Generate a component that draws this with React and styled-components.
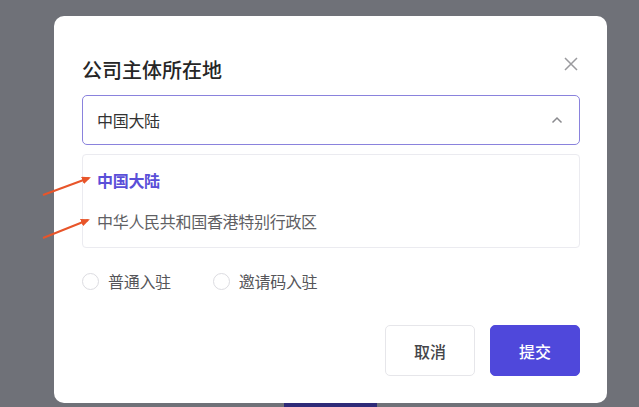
import React, { useState } from 'react';
import styled, { createGlobalStyle } from 'styled-components';

const GlobalStyle = createGlobalStyle`
  html, body {
    margin: 0;
    padding: 0;
    background: #6f7178;
    font-family: "Noto Sans CJK SC", "Noto Sans", sans-serif;
  }
`;

const Page = styled.div`
  position: relative;
  width: 639px;
  height: 407px;
  overflow: hidden;
  padding: 16px 32px 0 54px;
  box-sizing: border-box;
`;

const Modal = styled.div`
  width: 553px;
  height: 387px;
  box-sizing: border-box;
  background: #fff;
  border-radius: 10px;
  padding: 40px 27px 27px 28px;
  display: flex;
  flex-direction: column;
`;

const Header = styled.div`
  display: flex;
  align-items: center;
  justify-content: space-between;
  height: 28px;
`;

const Title = styled.h2`
  margin: 0;
  font-size: 20px;
  line-height: 28px;
  font-weight: 500;
  color: #262626;
`;

const CloseButton = styled.button`
  border: 0;
  background: none;
  padding: 0;
  width: 16px;
  height: 16px;
  margin: -12px 1px 0 0;
  display: flex;
  align-items: center;
  justify-content: center;
  color: #9a9a9e;
  cursor: pointer;
`;

const SelectBox = styled.div`
  margin-top: 11px;
  height: 50px;
  box-sizing: border-box;
  border: 1.5px solid #8a82dd;
  border-radius: 5px;
  display: flex;
  align-items: center;
  justify-content: space-between;
  padding: 0 16px 0 14px;
  font-size: 16px;
  letter-spacing: -0.3px;
  color: #333;
`;

const Menu = styled.ul`
  list-style: none;
  margin: 9px 0 0;
  padding: 4px 0 8px;
  height: 94px;
  box-sizing: border-box;
  border: 1px solid #ebebf0;
  border-radius: 4px;
`;

const Option = styled.li`
  height: 41px;
  display: flex;
  align-items: center;
  padding-left: 14px;
  font-size: 16px;
  letter-spacing: -0.3px;
  font-weight: ${p => (p.$active ? 600 : 400)};
  color: ${p => (p.$active ? '#5a4fd8' : '#5f5f64')};
`;

const RadioRow = styled.div`
  margin-top: 21px;
  height: 24px;
  display: flex;
  align-items: center;
  gap: 42px;
`;

const RadioLabel = styled.label`
  display: flex;
  align-items: center;
  gap: 9px;
  font-size: 16px;
  letter-spacing: -0.3px;
  color: #555559;
  cursor: pointer;
`;

const RadioDot = styled.span`
  width: 17px;
  height: 17px;
  box-sizing: border-box;
  border-radius: 50%;
  border: 1px solid ${p => (p.$checked ? '#5a4fd8' : '#dcdce1')};
  background: #fff;
`;

const Footer = styled.div`
  margin-top: auto;
  display: flex;
  justify-content: flex-end;
  gap: 15px;
`;

const Button = styled.button`
  width: 90px;
  height: 51px;
  border-radius: 5px;
  font-family: inherit;
  font-size: 16px;
  font-weight: 500;
  cursor: pointer;
  border: 1px solid ${p => (p.$primary ? '#4f48db' : '#e6e6ea')};
  background: ${p => (p.$primary ? '#4f48db' : '#fff')};
  color: ${p => (p.$primary ? '#fff' : '#45454a')};
`;

const PeekButton = styled.div`
  margin-left: 230px;
  width: 93px;
  height: 20px;
  background: #2e2a78;
`;

const Annotation = styled.svg`
  position: absolute;
  left: 0;
  top: 0;
  pointer-events: none;
`;

const options = ['中国大陆', '中华人民共和国香港特别行政区'];

export default function App() {
  const [selected, setSelected] = useState(0);
  const [mode, setMode] = useState(null);

  return (
    <>
      <GlobalStyle />
      <Page>
        <Modal>
          <Header>
            <Title>公司主体所在地</Title>
            <CloseButton aria-label="close">
              <svg width="14" height="14" viewBox="0 0 14 14">
                <path d="M1 1L13 13M13 1L1 13" stroke="currentColor" strokeWidth="1.5" fill="none" />
              </svg>
            </CloseButton>
          </Header>
          <SelectBox>
            <span>{options[selected]}</span>
            <svg width="12" height="8" viewBox="0 0 12 8">
              <path d="M1.5 6.5L6 2L10.5 6.5" stroke="#8a8a8e" strokeWidth="1.5" fill="none" />
            </svg>
          </SelectBox>
          <Menu>
            {options.map((o, i) => (
              <Option key={o} $active={i === selected} onClick={() => setSelected(i)}>
                {o}
              </Option>
            ))}
          </Menu>
          <RadioRow>
            <RadioLabel onClick={() => setMode('normal')}>
              <RadioDot $checked={mode === 'normal'} />
              普通入驻
            </RadioLabel>
            <RadioLabel onClick={() => setMode('invite')}>
              <RadioDot $checked={mode === 'invite'} />
              邀请码入驻
            </RadioLabel>
          </RadioRow>
          <Footer>
            <Button>取消</Button>
            <Button $primary>提交</Button>
          </Footer>
        </Modal>
        <PeekButton />
        <Annotation width="639" height="407">
          <defs>
            <marker id="head" markerWidth="9" markerHeight="8" refX="7" refY="4" orient="auto" markerUnits="userSpaceOnUse">
              <path d="M0 0L9 4L0 8Z" fill="#e8552a" />
            </marker>
          </defs>
          <line x1="43" y1="195" x2="89" y2="178" stroke="#e8552a" strokeWidth="2" markerEnd="url(#head)" />
          <line x1="43" y1="238" x2="88" y2="220" stroke="#e8552a" strokeWidth="2" markerEnd="url(#head)" />
        </Annotation>
      </Page>
    </>
  );
}
